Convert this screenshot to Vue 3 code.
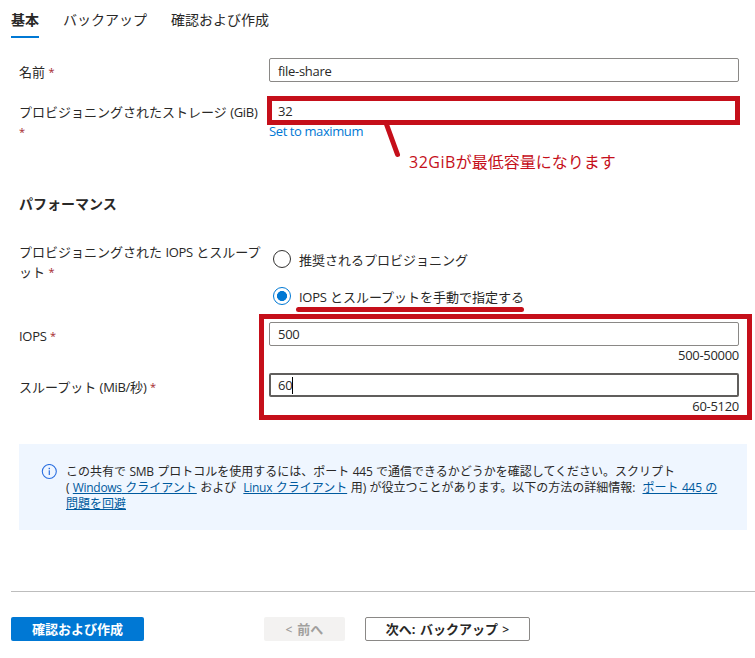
<script setup>
import { ref } from 'vue'

const tabs = ['基本', 'バックアップ', '確認および作成']
const activeTab = ref(0)
const mode = ref('manual')
</script>

<template>
  <main class="page">
    <nav class="tabs">
      <div
        v-for="(tab, i) in tabs"
        :key="tab"
        class="tab"
        :class="{ active: i === activeTab }"
        @click="activeTab = i"
      >{{ tab }}</div>
    </nav>

    <section class="form">
      <div class="row name-row">
        <div class="label">名前 <span class="req">*</span></div>
        <div class="field"><div class="input"><span class="en">file-share</span></div></div>
      </div>
      <div class="row storage-row">
        <div class="label">プロビジョニングされたストレージ <span class="en">(GiB)</span><br /><span class="req">*</span></div>
        <div class="field">
          <div class="input"><span class="en">32</span></div>
          <a class="max en">Set to maximum</a>
        </div>
      </div>

      <h2 class="heading">パフォーマンス</h2>

      <div class="row mode-row">
        <div class="label">プロビジョニングされた <span class="en">IOPS</span> とスループ<br />ット <span class="req">*</span></div>
        <div class="radios">
          <div class="radio" @click="mode = 'recommended'">
            <span class="dot" :class="{ on: mode === 'recommended' }"></span>
            <span class="radio-text">推奨されるプロビジョニング</span>
          </div>
          <div class="radio" @click="mode = 'manual'">
            <span class="dot" :class="{ on: mode === 'manual' }"></span>
            <span class="radio-text"><span class="en">IOPS</span> とスループットを手動で指定する</span>
          </div>
        </div>
      </div>
      <div class="row limit-row">
        <div class="label"><span class="en">IOPS</span> <span class="req">*</span></div>
        <div class="field">
          <div class="input raised"><span class="en">500</span></div>
          <div class="range en">500-50000</div>
        </div>
      </div>
      <div class="row limit-row">
        <div class="label">スループット <span class="en">(MiB/</span>秒<span class="en">)</span> <span class="req">*</span></div>
        <div class="field">
          <div class="input focused"><span class="en">60</span><i class="caret"></i></div>
          <div class="range en">60-5120</div>
        </div>
      </div>
    </section>

    <aside class="info">
      <svg class="info-icon" width="16" height="16" viewBox="0 0 16 16">
        <circle cx="8.3" cy="7.5" r="7" fill="none" stroke="#2b6fe0" stroke-width="1.1" />
        <rect x="7.7" y="6.3" width="1.2" height="4.7" fill="#2b6fe0" />
        <rect x="7.6" y="3.8" width="1.4" height="1.4" fill="#2b6fe0" />
      </svg>
      <div class="info-text">
        <div>この共有で <span class="en">SMB</span> プロトコルを使用するには、ポート <span class="en">445</span> で通信できるかどうかを確認してください。スクリプト</div>
        <div><span class="en">(</span> <a><span class="en">Windows</span> クライアント</a> および&nbsp; <a><span class="en">Linux</span> クライアント</a> 用<span class="en">)</span> が役立つことがあります。以下の方法の詳細情報:&nbsp; <a>ポート <span class="en">445</span> の</a></div>
        <div><a>問題を回避</a></div>
      </div>
    </aside>

    <footer class="footer">
      <button class="btn primary">確認および作成</button>
      <button class="btn disabled"><span class="arrow">&lt;</span> 前へ</button>
      <button class="btn outline">次へ: バックアップ <span class="arrow">&gt;</span></button>
    </footer>

    <svg class="marks" width="755" height="658" viewBox="0 0 755 658" fill="none" stroke="#c50f1a" stroke-width="5">
      <rect x="269.5" y="98.5" width="468" height="24" />
      <path d="M386 123L397.5 154.5" stroke-linecap="round" />
      <path d="M298.5 309.5H521.5" stroke-linecap="round" />
      <rect x="261.5" y="316.5" width="488" height="101" />
    </svg>
    <div class="note"><span class="note-en">32GiB</span>が最低容量になります</div>
  </main>
</template>

<style>
body {
  background: #fff;
}
</style>

<style scoped>
.page {
  position: relative;
  box-sizing: border-box;
  width: 755px;
  height: 658px;
  overflow: hidden;
  display: flex;
  flex-direction: column;
  font-family: "Open Sans", "Noto Sans CJK JP", sans-serif;
  font-size: 13px;
  line-height: 20px;
  color: #292827;
  white-space: nowrap;
}
.en {
  letter-spacing: -0.3px;
}
.tabs {
  display: flex;
  gap: 24px;
  padding-left: 11px;
  height: 58px;
  font-size: 14px;
}
.tab {
  box-sizing: border-box;
  height: 38px;
  padding-top: 10px;
}
.tab.active {
  font-weight: 600;
  border-bottom: 2px solid #0078d4;
}
.form {
  padding-left: 19px;
}
.row {
  display: flex;
}
.label {
  width: 250px;
  padding-top: 4px;
}
.req {
  font-size: 11px;
  line-height: 1;
  vertical-align: 1px;
  color: #a4262c;
}
.field {
  width: 470px;
}
.input {
  box-sizing: border-box;
  display: flex;
  align-items: center;
  height: 24px;
  padding: 2px 8px 0;
  border: 1px solid #8a8886;
  border-radius: 2px;
}
.input.raised {
  padding-top: 0;
}
.input.focused {
  border: 2px solid #605e5c;
  padding: 0 7px;
}
.caret {
  width: 1px;
  height: 17px;
  background: #000;
}
.name-row {
  height: 40px;
}
.storage-row {
  height: 96px;
}
.max {
  display: block;
  margin-top: -1px;
  letter-spacing: -0.4px;
  color: #0078d4;
}
.heading {
  margin: 0;
  height: 48px;
  font-size: 14px;
  font-weight: 700;
  line-height: 20px;
}
.mode-row {
  height: 80px;
}
.mode-row .label {
  padding-top: 0;
}
.radios {
  display: flex;
  flex-direction: column;
  gap: 17px;
  padding: 7px 0 0 4px;
}
.radio {
  display: flex;
  align-items: center;
  gap: 8px;
  height: 20px;
}
.radio-text {
  padding-top: 2px;
}
.dot {
  box-sizing: border-box;
  width: 18px;
  height: 18px;
  border: 1px solid #323130;
  border-radius: 50%;
}
.dot.on {
  border-color: #0078d4;
  background: radial-gradient(circle, #0078d4 4.7px, transparent 5.3px);
}
.limit-row {
  height: 51px;
}
.range {
  margin-top: -1px;
  text-align: right;
}
.info {
  box-sizing: border-box;
  display: flex;
  gap: 9px;
  width: 728px;
  height: 86px;
  margin: 20px 0 0 19px;
  padding: 20px 0 0 22px;
  background: #eff6ff;
  font-size: 12px;
  line-height: 16px;
  word-spacing: 0.4px;
}
.info a {
  color: #005a9e;
  text-decoration: underline;
}
.footer {
  display: flex;
  margin: 61px 0 0 11px;
  padding-top: 25px;
  border-top: 1px solid #bdbdbd;
}
.btn {
  box-sizing: border-box;
  height: 24px;
  padding: 0;
  border: 0;
  border-radius: 2px;
  font: inherit;
  font-weight: 700;
}
.primary {
  width: 133px;
  background: #0078d4;
  color: #fff;
}
.disabled {
  width: 81px;
  margin-left: 120px;
  background: #f3f2f1;
  color: #a19f9d;
  word-spacing: 1.5px;
}
.outline {
  width: 165px;
  margin-left: 20px;
  border: 1px solid #8a8886;
  background: #fff;
  color: #292827;
  word-spacing: 1px;
}
.arrow {
  font-size: 12px;
  font-weight: 600;
}
.marks {
  position: absolute;
  left: 0;
  top: 0;
  pointer-events: none;
}
.note {
  position: absolute;
  left: 409px;
  top: 150px;
  font-size: 16px;
  line-height: 24px;
  color: #c50f1a;
}
.note-en {
  letter-spacing: 0.5px;
}
</style>
